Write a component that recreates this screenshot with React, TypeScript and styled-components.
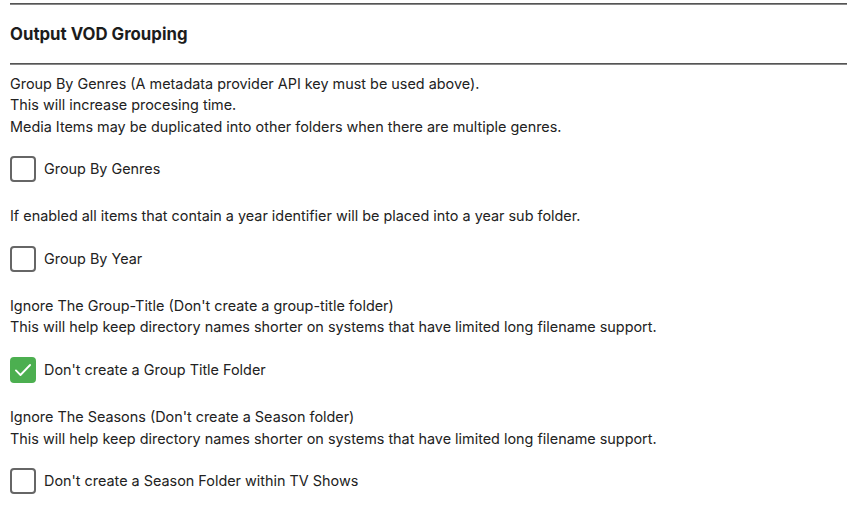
import styled, { createGlobalStyle } from "styled-components";

const GlobalStyle = createGlobalStyle`
  body {
    margin: 0;
    background: #fff;
    font-family: Inter, "Noto Sans", sans-serif;
    color: #222;
  }
`;

const Wrapper = styled.div`
  padding: 3px 0 0 10px;
  font-size: 14.4px;
  line-height: 21.8px;
`;

const Rule = styled.hr`
  margin: 0;
  border: 0;
  border-top: 1px solid #555;
  border-bottom: 1px solid #888;
  height: 0;
`;

const Title = styled.h3`
  margin: 0;
  padding: 18px 0 18px;
  font-size: 16.8px;
  line-height: 22px;
  font-weight: 700;
  color: #1c1c1c;
`;

const Group = styled.div`
  display: flex;
  flex-direction: column;
  padding-top: 7.5px;

  & + & {
    padding-top: 23px;
  }
`;

const Note = styled.p`
  margin: 0;
`;

const Field = styled.label`
  display: flex;
  align-items: center;
  gap: 8px;
  margin-top: 18.5px;
  font-size: 14.4px;
  cursor: pointer;
`;

const Box = styled.span<{ $checked?: boolean }>`
  display: inline-flex;
  align-items: center;
  justify-content: center;
  box-sizing: border-box;
  width: 26px;
  height: 26px;
  border-radius: 4px;
  border: 2px solid ${(p) => (p.$checked ? "#4caf50" : "#666")};
  background: ${(p) => (p.$checked ? "#4caf50" : "#fff")};
`;

const Check = () => (
  <svg width="20" height="20" viewBox="0 0 24 24" fill="none">
    <path
      d="M3.5 12.5l5.5 5.5L20.5 6"
      stroke="#fff"
      strokeWidth="2.2"
      strokeLinecap="round"
      strokeLinejoin="round"
    />
  </svg>
);

const options = [
  {
    notes: [
      "Group By Genres (A metadata provider API key must be used above).",
      "This will increase procesing time.",
      "Media Items may be duplicated into other folders when there are multiple genres.",
    ],
    label: "Group By Genres",
    checked: false,
  },
  {
    notes: [
      "If enabled all items that contain a year identifier will be placed into a year sub folder.",
    ],
    label: "Group By Year",
    checked: false,
  },
  {
    notes: [
      "Ignore The Group-Title (Don't create a group-title folder)",
      "This will help keep directory names shorter on systems that have limited long filename support.",
    ],
    label: "Don't create a Group Title Folder",
    checked: true,
  },
  {
    notes: [
      "Ignore The Seasons (Don't create a Season folder)",
      "This will help keep directory names shorter on systems that have limited long filename support.",
    ],
    label: "Don't create a Season Folder within TV Shows",
    checked: false,
  },
];

const App = () => {
  return (
    <>
      <GlobalStyle />
      <Wrapper>
        <Rule />
        <Title>Output VOD Grouping</Title>
        <Rule />
        {options.map((o) => (
          <Group key={o.label}>
            {o.notes.map((n) => (
              <Note key={n}>{n}</Note>
            ))}
            <Field>
              <Box $checked={o.checked}>{o.checked && <Check />}</Box>
              {o.label}
            </Field>
          </Group>
        ))}
      </Wrapper>
    </>
  );
};

export default App;
